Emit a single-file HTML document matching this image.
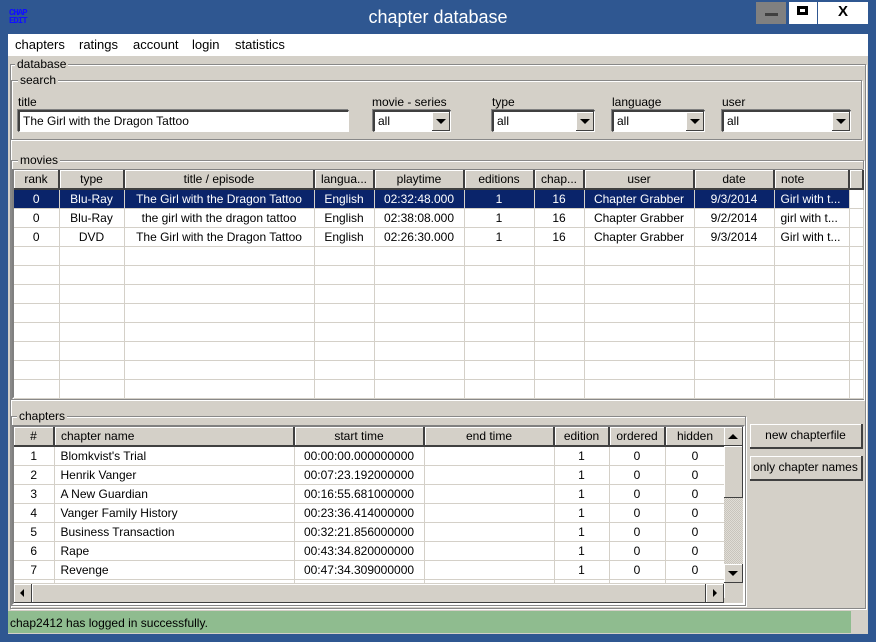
<!DOCTYPE html>
<html><head><style>
*{box-sizing:border-box;margin:0;padding:0}
body{width:876px;height:642px;background:#2f5791;position:relative;overflow:hidden;font-family:"Liberation Sans",Arial,sans-serif;font-size:12px;color:#000}
.a{position:absolute}
.grp{position:absolute;border:1px solid #888;box-shadow:inset 1px 1px 0 #fff,1px 1px 0 #fff}
.lbl{position:absolute;background:#d4d0c8;padding:0 2px;font-size:12px;line-height:12px}
.inp{position:absolute;background:#fff;border-top:2px solid #404040;border-left:2px solid #404040;border-right:1px solid #fff;border-bottom:1px solid #fff;box-shadow:-1px -1px 0 #808080;padding:2px 3px;font-size:12px;line-height:15px}
.btn{position:absolute;right:0;top:0;bottom:0;width:18px;background:#d4d0c8;border-right:1px solid #404040;border-bottom:1px solid #404040;box-shadow:inset 1px 1px 0 #fff}
.tri{position:absolute;left:4px;top:7px;width:0;height:0;border-left:5px solid transparent;border-right:5px solid transparent;border-top:5px solid #000}
table{border-collapse:collapse;table-layout:fixed;position:absolute;font-size:12px}
th{background:#d4d0c8;font-weight:normal;height:19px;border-right:2px solid #404040;border-bottom:2px solid #404040;box-shadow:inset 1px 1px 0 #fff;padding:0;white-space:nowrap;overflow:hidden}
td{height:19px;border-right:1px solid #d4d0c8;border-bottom:1px solid #d4d0c8;text-align:center;white-space:nowrap;overflow:hidden;padding:0;background:#fff}
tr.sel td{background:#0a246a;color:#fff}
.l{text-align:left;padding-left:6px}
</style></head><body>
<!-- title bar -->
<div class="a" style="left:9px;top:9px;color:#1010ff;font-family:'Liberation Mono',monospace;font-size:9px;line-height:8px;font-weight:bold;letter-spacing:-1px">CHAP<br>EDIT</div>
<div class="a" style="left:0;width:876px;top:6px;text-align:center;color:#fff;font-size:18px;line-height:22px">chapter database</div>
<div class="a" style="left:756px;top:2px;width:30px;height:22px;background:#808080"><div class="a" style="left:9px;top:11px;width:13px;height:3px;background:#404040"></div></div>
<div class="a" style="left:789px;top:2px;width:28px;height:22px;background:#fff"><div class="a" style="left:8px;top:4px;width:11px;height:9px;border:3px solid #000"></div></div>
<div class="a" style="left:818px;top:2px;width:50px;height:22px;background:#fff;text-align:center;font-weight:bold;font-size:15px;line-height:20px">X</div>
<!-- menu -->
<div class="a" style="left:8px;top:34px;width:860px;height:22px;background:#fff;font-size:13px;line-height:22px">
<span class="a" style="left:7px">chapters</span><span class="a" style="left:71px">ratings</span><span class="a" style="left:125px">account</span><span class="a" style="left:184px">login</span><span class="a" style="left:227px">statistics</span></div>
<!-- content -->
<div class="a" style="left:8px;top:56px;width:860px;height:578px;background:#d4d0c8"></div>
<div class="grp" style="left:10px;top:64px;width:856px;height:545px"></div>
<div class="lbl" style="left:15px;top:58px">database</div>
<div class="grp" style="left:11px;top:80px;width:851px;height:60px"></div>
<div class="lbl" style="left:18px;top:74px">search</div>
<div class="a" style="left:18px;top:95px">title</div>
<div class="inp" style="left:18px;top:110px;width:331px;height:22px">The Girl with the Dragon Tattoo</div>
<div class="a" style="left:372px;top:95px">movie - series</div>
<div class="inp" style="left:373px;top:110px;width:78px;height:22px">all<div class="btn"><div class="tri"></div></div></div>
<div class="a" style="left:492px;top:95px">type</div>
<div class="inp" style="left:492px;top:110px;width:103px;height:22px">all<div class="btn"><div class="tri"></div></div></div>
<div class="a" style="left:612px;top:95px">language</div>
<div class="inp" style="left:612px;top:110px;width:93px;height:22px">all<div class="btn"><div class="tri"></div></div></div>
<div class="a" style="left:722px;top:95px">user</div>
<div class="inp" style="left:722px;top:110px;width:129px;height:22px">all<div class="btn"><div class="tri"></div></div></div>
<!-- movies -->
<div class="grp" style="left:11px;top:160px;width:853px;height:240px"></div>
<div class="lbl" style="left:18px;top:154px">movies</div>
<div class="a" style="left:12px;top:169px;width:852px;height:230px;background:#fff;border:2px solid #808080;border-right-color:#fff;border-bottom-color:#fff"></div>
<table style="left:14px;top:170px;width:849px">
<colgroup><col style="width:45px"><col style="width:65px"><col style="width:190px"><col style="width:60px"><col style="width:90px"><col style="width:70px"><col style="width:50px"><col style="width:110px"><col style="width:80px"><col style="width:75px"><col style="width:14px"></colgroup>
<tr><th>rank</th><th>type</th><th>title / episode</th><th>langua...</th><th>playtime</th><th>editions</th><th>chap...</th><th>user</th><th>date</th><th style="text-align:left;padding-left:6px">note</th><th></th></tr>
<tr class="sel"><td>0</td><td>Blu-Ray</td><td>The Girl with the Dragon Tattoo</td><td>English</td><td>02:32:48.000</td><td>1</td><td>16</td><td>Chapter Grabber</td><td>9/3/2014</td><td class="l">Girl with t...</td><td style="background:#fff"></td></tr>
<tr><td>0</td><td>Blu-Ray</td><td>the girl with the dragon tattoo</td><td>English</td><td>02:38:08.000</td><td>1</td><td>16</td><td>Chapter Grabber</td><td>9/2/2014</td><td class="l">girl with t...</td><td></td></tr>
<tr><td>0</td><td>DVD</td><td>The Girl with the Dragon Tattoo</td><td>English</td><td>02:26:30.000</td><td>1</td><td>16</td><td>Chapter Grabber</td><td>9/3/2014</td><td class="l">Girl with t...</td><td></td></tr>
<tr><td></td><td></td><td></td><td></td><td></td><td></td><td></td><td></td><td></td><td></td><td></td></tr>
<tr><td></td><td></td><td></td><td></td><td></td><td></td><td></td><td></td><td></td><td></td><td></td></tr>
<tr><td></td><td></td><td></td><td></td><td></td><td></td><td></td><td></td><td></td><td></td><td></td></tr>
<tr><td></td><td></td><td></td><td></td><td></td><td></td><td></td><td></td><td></td><td></td><td></td></tr>
<tr><td></td><td></td><td></td><td></td><td></td><td></td><td></td><td></td><td></td><td></td><td></td></tr>
<tr><td></td><td></td><td></td><td></td><td></td><td></td><td></td><td></td><td></td><td></td><td></td></tr>
<tr><td></td><td></td><td></td><td></td><td></td><td></td><td></td><td></td><td></td><td></td><td></td></tr>
<tr><td style="height:17px"></td><td></td><td></td><td></td><td></td><td></td><td></td><td></td><td></td><td></td><td></td></tr>
</table>
<!-- chapters -->
<div class="grp" style="left:11px;top:416px;width:735px;height:190px"></div>
<div class="lbl" style="left:17px;top:410px">chapters</div>
<div class="a" style="left:12px;top:425px;width:733px;height:180px;background:#d4d0c8;border:2px solid #808080;border-right-color:#fff;border-bottom-color:#fff;overflow:hidden">
<table style="left:0;top:0;width:711px">
<colgroup><col style="width:40px"><col style="width:240px"><col style="width:130px"><col style="width:130px"><col style="width:55px"><col style="width:56px"><col style="width:60px"></colgroup>
<tr><th>#</th><th class="l" style="text-align:left;padding-left:6px">chapter name</th><th>start time</th><th>end time</th><th>edition</th><th>ordered</th><th>hidden</th></tr>
<tr><td>1</td><td class="l">Blomkvist's Trial</td><td>00:00:00.000000000</td><td></td><td>1</td><td>0</td><td>0</td></tr>
<tr><td>2</td><td class="l">Henrik Vanger</td><td>00:07:23.192000000</td><td></td><td>1</td><td>0</td><td>0</td></tr>
<tr><td>3</td><td class="l">A New Guardian</td><td>00:16:55.681000000</td><td></td><td>1</td><td>0</td><td>0</td></tr>
<tr><td>4</td><td class="l">Vanger Family History</td><td>00:23:36.414000000</td><td></td><td>1</td><td>0</td><td>0</td></tr>
<tr><td>5</td><td class="l">Business Transaction</td><td>00:32:21.856000000</td><td></td><td>1</td><td>0</td><td>0</td></tr>
<tr><td>6</td><td class="l">Rape</td><td>00:43:34.820000000</td><td></td><td>1</td><td>0</td><td>0</td></tr>
<tr><td>7</td><td class="l">Revenge</td><td>00:47:34.309000000</td><td></td><td>1</td><td>0</td><td>0</td></tr>
<tr><td>8</td><td class="l">Blomkvist and Vanger</td><td>00:53:38.000000000</td><td></td><td>1</td><td>0</td><td>0</td></tr>
</table>
<!-- vscroll -->
<div class="a" style="left:710px;top:0;width:19px;height:156px;background:repeating-conic-gradient(#c8c4bc 0 25%,#e0ddd6 0 50%) 0 0/2px 2px"></div>
<div class="a" style="left:710px;top:0;width:19px;height:19px;background:#d4d0c8;border-right:1px solid #404040;border-bottom:1px solid #404040;box-shadow:inset 1px 1px 0 #fff"><div class="a" style="left:4px;top:7px;border-left:5px solid transparent;border-right:5px solid transparent;border-bottom:5px solid #000"></div></div>
<div class="a" style="left:710px;top:19px;width:19px;height:52px;background:#d4d0c8;border-right:1px solid #404040;border-bottom:1px solid #404040;box-shadow:inset 1px 1px 0 #fff"></div>
<div class="a" style="left:710px;top:137px;width:19px;height:19px;background:#d4d0c8;border-right:1px solid #404040;border-bottom:1px solid #404040;box-shadow:inset 1px 1px 0 #fff"><div class="a" style="left:4px;top:7px;border-left:5px solid transparent;border-right:5px solid transparent;border-top:5px solid #000"></div></div>
<!-- hscroll -->
<div class="a" style="left:0;top:156px;width:710px;height:20px;background:#d4d0c8"></div>
<div class="a" style="left:0;top:157px;width:18px;height:19px;border-right:1px solid #404040;border-bottom:1px solid #404040;box-shadow:inset 1px 1px 0 #fff"><div class="a" style="left:6px;top:5px;border-top:4px solid transparent;border-bottom:4px solid transparent;border-right:4px solid #000"></div></div>
<div class="a" style="left:18px;top:157px;width:674px;height:19px;border-right:1px solid #404040;border-bottom:1px solid #404040;box-shadow:inset 1px 1px 0 #fff"></div>
<div class="a" style="left:692px;top:157px;width:18px;height:19px;border-right:1px solid #404040;border-bottom:1px solid #404040;box-shadow:inset 1px 1px 0 #fff"><div class="a" style="left:7px;top:5px;border-top:4px solid transparent;border-bottom:4px solid transparent;border-left:4px solid #000"></div></div>
</div>
<div class="a" style="left:750px;top:424px;width:113px;height:25px;border-right:2px solid #404040;border-bottom:2px solid #404040;box-shadow:inset 1px 1px 0 #fff;text-align:center;line-height:23px">new chapterfile</div>
<div class="a" style="left:750px;top:456px;width:113px;height:25px;border-right:2px solid #404040;border-bottom:2px solid #404040;box-shadow:inset 1px 1px 0 #fff;text-align:center;line-height:23px;white-space:nowrap">only chapter names</div>
<!-- status -->
<div class="a" style="left:8px;top:611px;width:843px;height:22px;background:#8fbc8f;line-height:24px;padding-left:2px">chap2412 has logged in successfully.</div>
<div class="a" style="left:851px;top:611px;width:17px;height:22px;background:#d4d0c8"></div>
</body></html>
